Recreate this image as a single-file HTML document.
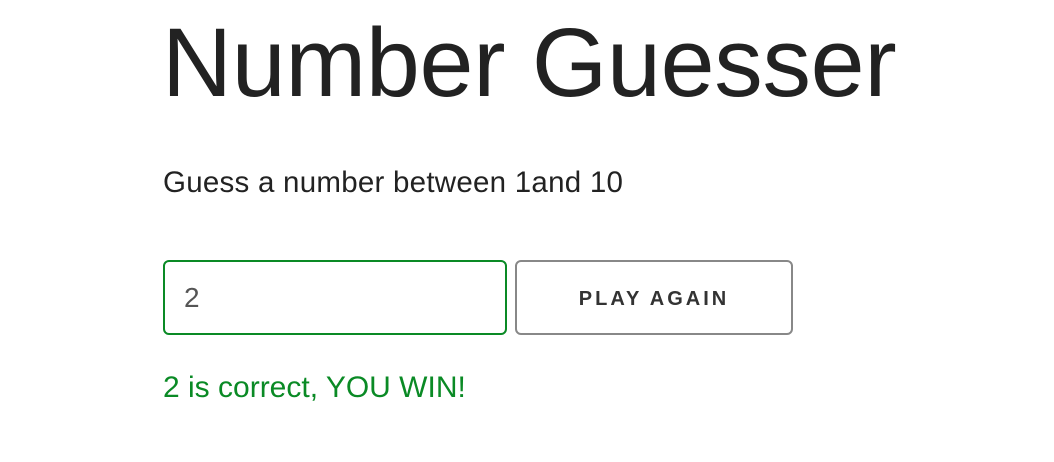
<!DOCTYPE html>
<html><head><style>
body{margin:0;background:#fff;font-family:"Liberation Sans",sans-serif;color:#222;width:1054px;height:462px;overflow:hidden;position:relative}
h1{position:absolute;left:162px;top:3px;margin:0;font-weight:400;font-size:97px;line-height:120px;color:#222;letter-spacing:-0.3px}
.p{position:absolute;left:163px;top:166px;font-size:29.5px;line-height:34px;color:#222;letter-spacing:0.25px}
.in{position:absolute;left:163px;top:260px;border:2px solid #0a8a25;border-radius:6px;width:340px;height:71px}
.in span{position:absolute;left:19px;top:20px;font-size:28px;color:#555}
.btn{position:absolute;left:515px;top:260px;width:274px;height:71px;border:2px solid #888;border-radius:6px;text-align:center;line-height:75px;font-weight:700;font-size:20px;letter-spacing:3px;color:#333}
.msg{position:absolute;left:163px;top:370px;font-size:30px;line-height:36px;color:#0a8a25}
</style></head><body>
<h1>Number Guesser</h1>
<div class="p">Guess a number between 1and 10</div>
<div class="in"><span>2</span></div>
<div class="btn">PLAY AGAIN</div>
<div class="msg">2 is correct, YOU WIN!</div>
</body></html>
